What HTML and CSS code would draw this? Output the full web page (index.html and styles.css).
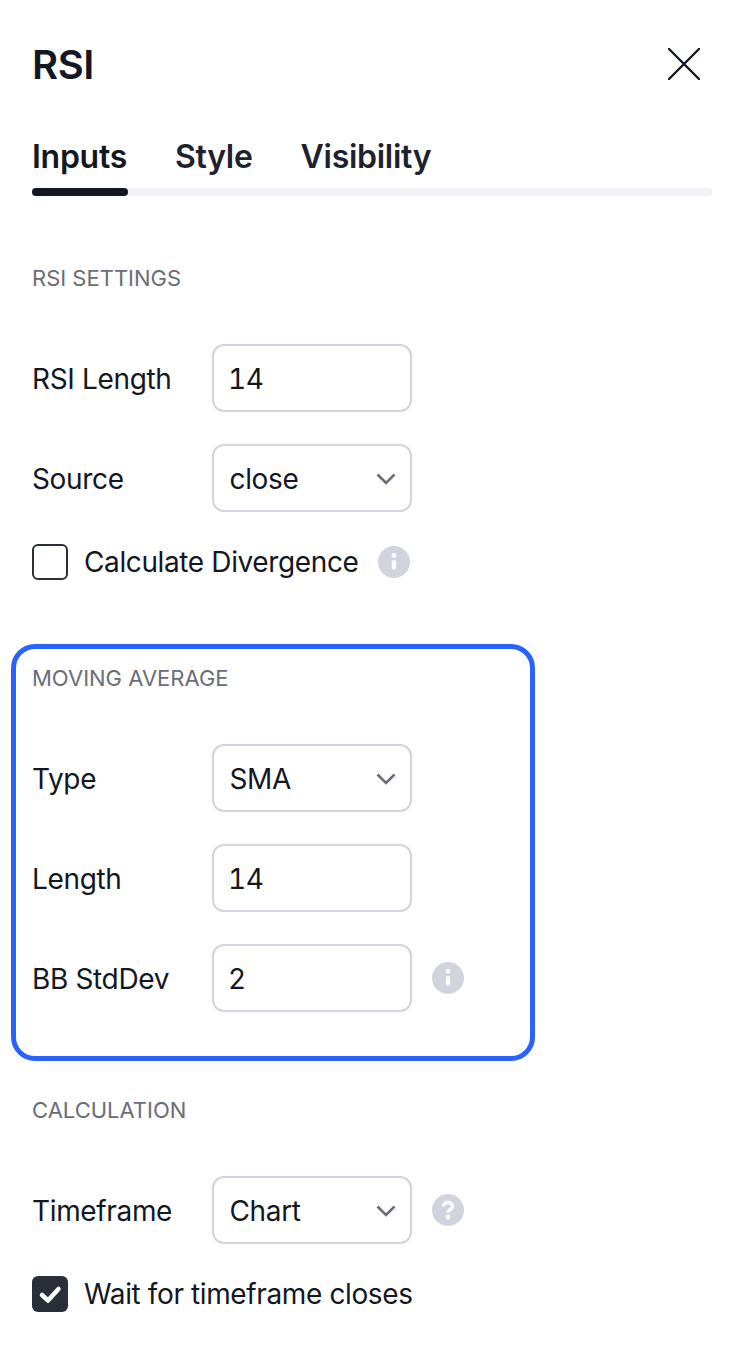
FILE: index.html
```html
<!DOCTYPE html>
<html lang="en">
<head>
<meta charset="utf-8">
<title>RSI</title>
<link rel="stylesheet" href="styles.css">
</head>
<body>
<main class="panel">
  <header class="header">
    <h1 class="title">RSI</h1>
    <svg class="close" viewBox="0 0 32 32" aria-label="Close"><path d="M1 1 31 31M31 1 1 31"/></svg>
  </header>
  <nav class="tabs">
    <span class="tab tab-active">Inputs</span>
    <span class="tab">Style</span>
    <span class="tab">Visibility</span>
  </nav>
  <div class="tab-track"><div class="tab-thumb"></div></div>

  <section class="group group-first">
    <h2 class="group-title">RSI SETTINGS</h2>
    <div class="rows">
      <div class="row"><span class="label">RSI Length</span><div class="field field-num">14</div></div>
      <div class="row"><span class="label">Source</span><div class="field">close<svg class="chev" viewBox="0 0 20 12"><path d="M1.500 1.500 10 10l8.500-8.500"/></svg></div></div>
      <div class="check-row">
        <span class="check"></span><span class="label-check">Calculate Divergence</span>
        <span class="hint">
          <svg viewBox="0 0 32 32"><circle class="hint-bg" cx="16" cy="16" r="16"/><circle class="hint-fg" cx="16" cy="9.500" r="2.400"/><rect class="hint-fg" x="13.800" y="14" width="4.400" height="9.500" rx="2.200"/></svg>
        </span>
      </div>
    </div>
  </section>

  <section class="group group-focus">
    <h2 class="group-title">MOVING AVERAGE</h2>
    <div class="rows">
      <div class="row"><span class="label">Type</span><div class="field">SMA<svg class="chev" viewBox="0 0 20 12"><path d="M1.500 1.500 10 10l8.500-8.500"/></svg></div></div>
      <div class="row"><span class="label">Length</span><div class="field field-num">14</div></div>
      <div class="row"><span class="label">BB StdDev</span><div class="field field-num">2</div>
        <span class="hint">
          <svg viewBox="0 0 32 32"><circle class="hint-bg" cx="16" cy="16" r="16"/><circle class="hint-fg" cx="16" cy="9.500" r="2.400"/><rect class="hint-fg" x="13.800" y="14" width="4.400" height="9.500" rx="2.200"/></svg>
        </span>
      </div>
    </div>
  </section>

  <section class="group group-last">
    <h2 class="group-title">CALCULATION</h2>
    <div class="rows">
      <div class="row"><span class="label">Timeframe</span><div class="field">Chart<svg class="chev" viewBox="0 0 20 12"><path d="M1.500 1.500 10 10l8.500-8.500"/></svg></div>
        <span class="hint">
          <svg viewBox="0 0 32 32"><circle class="hint-bg" cx="16" cy="16" r="16"/><path class="hint-q" d="M11.500 12.500c0-2.600 2-4 4.500-4s4.500 1.500 4.500 3.800c0 3.300-4.500 3.400-4.500 6.200"/><circle class="hint-fg" cx="16" cy="23" r="2.400"/></svg>
        </span>
      </div>
      <div class="check-row">
        <span class="check check-on"><svg viewBox="0 0 36 36"><path d="M10 19 16 24.500 26.500 13"/></svg></span><span class="label-check">Wait for timeframe closes</span>
      </div>
    </div>
  </section>
</main>
</body>
</html>
```
FILE: styles.css
```css
* { box-sizing: border-box; }
html, body { margin: 0; padding: 0; background: #fff; }
body { font-family: Inter, "Liberation Sans", sans-serif; color: #131722; }
.panel { width: 746px; height: 1352px; padding: 0 34px 0 32px; overflow: hidden; }
.header { display: flex; justify-content: space-between; align-items: center; height: 48px; margin-top: 41px; padding-right: 12px; }
.title { margin: 0; font-size: 40px; font-weight: 600; line-height: 48px; letter-spacing: -0.4px; }
.close { width: 32px; height: 32px; margin-top: -2px; fill: none; stroke: #131722; stroke-width: 2.400; stroke-linecap: round; }
.tabs { display: flex; gap: 48px; margin-top: 48px; height: 40px; align-items: center; }
.tab { font-size: 32px; font-weight: 600; line-height: 40px; letter-spacing: -0.28px; color: #1e222d; }
.tab-active { color: #131722; }
.tab-track { height: 8px; margin-top: 11px; border-radius: 4px; background: #f2f2f7; }
.tab-thumb { width: 96px; height: 8px; border-radius: 4px; background: #131722; }
.group-first { margin-top: 68px; }
.group-title { margin: 0 0 52px; font-size: 22px; font-weight: 400; line-height: 28px; color: #6a6d78; }
.rows { display: flex; flex-direction: column; gap: 32px; }
.row { display: flex; align-items: center; height: 68px; }
.label { width: 180px; padding-top: 1px; font-size: 28px; line-height: 40px; letter-spacing: -0.35px; flex: none; }
.field { display: flex; justify-content: space-between; align-items: center; width: 200px; height: 68px; padding: 1px 14px 0 15.500px; flex: none; border: 2px solid #d1d4dc; border-radius: 12px; font-size: 28px; line-height: 40px; letter-spacing: -0.35px; background: #fff; }
.field-num { padding-left: 14px; font-variant-numeric: tabular-nums; }
.chev { width: 20px; height: 12px; fill: none; stroke: #6a6d78; stroke-width: 2.600; }
.check-row { display: flex; align-items: center; height: 36px; }
.check { display: flex; width: 36px; height: 36px; flex: none; border: 2px solid #2a2e39; border-radius: 6px; }
.check-on { background: #2a2e39; border: 0; }
.check-on svg { width: 36px; height: 36px; fill: none; stroke: #fff; stroke-width: 4.500; stroke-linecap: round; stroke-linejoin: round; }
.label-check { margin-left: 16px; font-size: 28px; line-height: 40px; letter-spacing: -0.38px; }
.hint { display: flex; width: 32px; height: 32px; margin-left: 20px; flex: none; }
.hint svg { width: 32px; height: 32px; }
.hint-bg { fill: #d1d4dc; }
.hint-fg { fill: #fff; }
.hint-q { fill: none; stroke: #fff; stroke-width: 3.400; }
.group-focus { width: 524px; height: 417px; margin: 64px 0 0 -21px; padding: 15px 16px; border: 5px solid #2962ff; border-radius: 24px; }
.group-last { margin-top: 35px; }
```
